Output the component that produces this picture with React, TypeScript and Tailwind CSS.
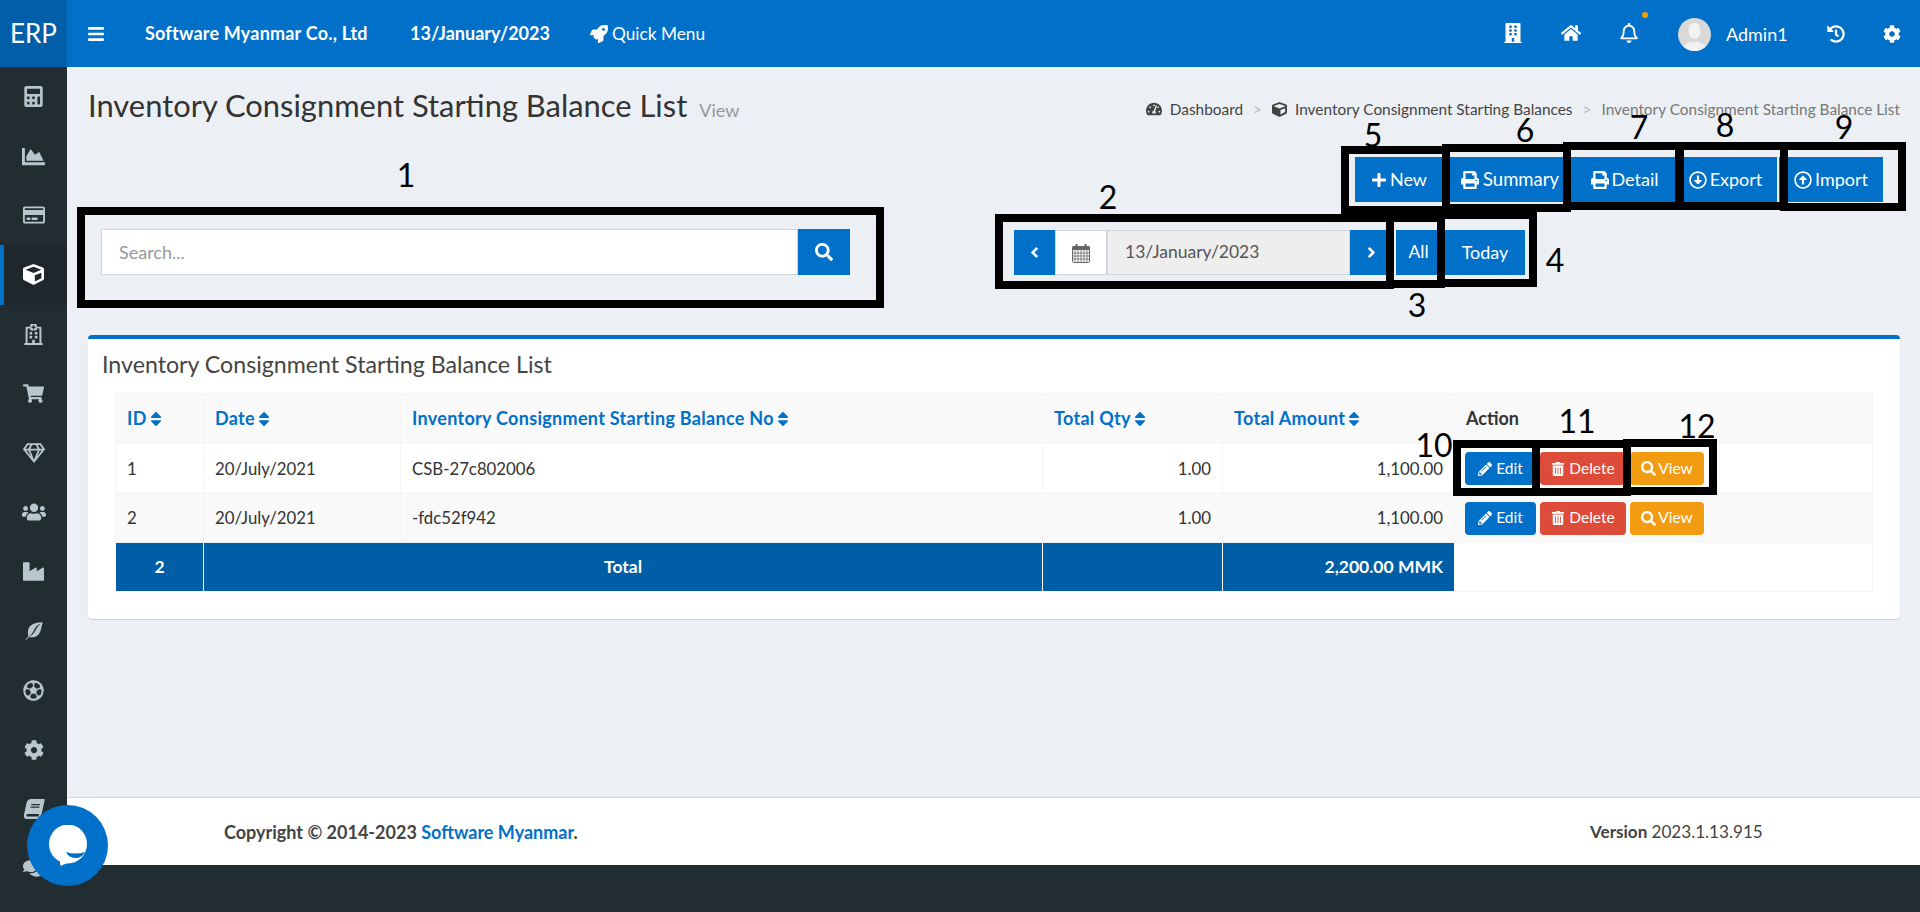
import {
  FaBars, FaRocket, FaBuilding, FaHome, FaRegBell, FaHistory, FaCog, FaCalculator, FaChartArea,
  FaRegCreditCard, FaCube, FaRegHospital, FaShoppingCart, FaRegGem, FaUsers, FaIndustry, FaEnvira,
  FaRegFutbol, FaBook, FaComments, FaTachometerAlt, FaSearch, FaPlus, FaPrint, FaRegArrowAltCircleDown,
  FaRegArrowAltCircleUp, FaAngleLeft, FaAngleRight, FaPencilAlt, FaTrashAlt, FaSort,
} from 'react-icons/fa';

const sideItems = [
  { icon: FaCalculator, size: 21 },
  { icon: FaChartArea, size: 23 },
  { icon: FaRegCreditCard, size: 22 },
  { icon: FaCube, size: 21 },
  { icon: FaRegHospital, size: 21 },
  { icon: FaShoppingCart, size: 21 },
  { icon: FaRegGem, size: 22 },
  { icon: FaUsers, size: 24 },
  { icon: FaIndustry, size: 21 },
  { icon: FaEnvira, size: 20, className: '-scale-x-100' },
  { icon: FaRegFutbol, size: 21 },
  { icon: FaCog, size: 20 },
  { icon: FaBook, size: 20, className: '-skew-x-12' },
  { icon: FaComments, size: 21 },
];

const Sortable = ({ label, w }: { label: string; w: string }) => (
  <th className={`${w} border border-[#f4f4f4] px-[11px] text-left font-bold tracking-[0.3px] text-[#0070c9]`}>
    <span className="inline-flex items-center">
      {label}
      <FaSort size={18} />
    </span>
  </th>
);

const RowActions = () => (
  <div className="flex gap-[4px] pl-[10px] pt-[1px] text-[15.5px] text-white">
    <button className="flex h-[33px] w-[71px] items-center justify-center gap-[4px] rounded-[4px] bg-[#0070c9]">
      <FaPencilAlt size={14} /> Edit
    </button>
    <button className="flex h-[33px] w-[86px] items-center justify-center gap-[4px] rounded-[4px] bg-[#dd4b39]">
      <FaTrashAlt size={14} /> Delete
    </button>
    <button className="flex h-[33px] w-[74px] items-center justify-center gap-[2px] rounded-[4px] bg-[#f39c12]">
      <FaSearch size={15} /> View
    </button>
  </div>
);

export default function App() {
  return (
    <div className="relative flex h-[912px] w-[1920px] flex-col overflow-hidden bg-[#ecf0f5] font-[Lato,sans-serif] text-[#333]">
      {/* Header */}
      <header className="flex h-[67px] shrink-0 items-center bg-[#0070c9] text-white">
        <div className="flex h-full w-[67px] items-center justify-center bg-[#005fa8] text-[26px]">ERP</div>
        <FaBars className="ml-[20px]" size={18} />
        <span className="ml-[40px] w-[224px] whitespace-nowrap text-[18px] font-bold tracking-[0.2px]">Software Myanmar Co., Ltd</span>
        <span className="ml-[41px] w-[139px] whitespace-nowrap text-[18px] font-bold">13/January/2023</span>
        <FaRocket className="ml-[41px]" size={18} />
        <span className="ml-[4px] text-[17.3px]">Quick Menu</span>
        <FaBuilding className="absolute left-[1503px] top-[23px]" size={20} />
        <FaHome className="absolute left-[1561px] top-[23px]" size={20} />
        <FaRegBell className="absolute left-[1619px] top-[23px]" size={20} />
        <span className="absolute left-[1642px] top-[12px] h-[6px] w-[6px] rounded-full bg-[#f39c12]" />
        <div className="absolute left-[1678px] top-[18px] h-[33px] w-[33px] overflow-hidden rounded-full bg-[#d9d9d9]">
          <svg viewBox="0 0 33 33" className="h-full w-full">
            <ellipse cx="16.5" cy="13" rx="6" ry="8" fill="#f2f2f2" />
            <path d="M4 33c1-8 7-9 12.5-9S28 25 29 33z" fill="#f2f2f2" />
          </svg>
        </div>
        <span className="absolute left-[1726px] top-[23px] text-[18px] leading-[22px]">Admin1</span>
        <FaHistory className="absolute left-[1827px] top-[25px]" size={18} />
        <FaCog className="absolute left-[1883px] top-[25px]" size={18} />
      </header>

      <div className="flex flex-1">
        {/* Sidebar */}
        <aside className="w-[67px] shrink-0 bg-[#222d32]">
          {sideItems.map((item, i) => (
            <div
              key={i}
              className={`flex h-[59.4px] items-center justify-center ${
                i === 3 ? 'border-l-4 border-[#0070c9] bg-[#1e282c] pr-[4px] text-white' : 'text-[#b8c7ce]'
              }`}
            >
              <item.icon size={item.size} className={item.className} />
            </div>
          ))}
        </aside>

        <div className="flex flex-1 flex-col">
          {/* Main */}
          <main className="relative h-[730px]">
            <div className="absolute left-[21px] top-[19px] flex items-baseline whitespace-nowrap">
              <h1 className="text-[30.9px] leading-[40px] text-[#333]">Inventory Consignment Starting Balance List</h1>
              <span className="ml-[12px] text-[18px] text-[#999]">View</span>
            </div>

            <div className="absolute right-[20px] top-[32px] flex items-center whitespace-nowrap text-[15.4px] leading-[20px] text-[#444]">
              <FaTachometerAlt size={16} />
              <span className="ml-[8px]">Dashboard</span>
              <span className="mx-[10px] text-[#bbb]">&gt;</span>
              <FaCube size={15} />
              <span className="ml-[8px]">Inventory Consignment Starting Balances</span>
              <span className="mx-[10px] text-[#bbb]">&gt;</span>
              <span className="text-[#777]">Inventory Consignment Starting Balance List</span>
            </div>

            {/* Toolbar */}
            <div className="absolute left-[1288px] top-[90px] flex h-[45px] text-[18px] text-white">
              <button className="flex w-[88px] items-center justify-center gap-[3px] bg-[#0070c9]"><FaPlus size={16} /> New</button>
              <button className="ml-[2px] flex w-[130px] items-center justify-center gap-[4px] bg-[#0070c9] text-[18.5px]"><FaPrint size={18} /> Summary</button>
              <button className="flex w-[99px] items-center justify-center gap-[3px] bg-[#0070c9]"><FaPrint size={18} /> Detail</button>
              <button className="flex w-[103px] items-center justify-center gap-[3px] bg-[#0070c9]"><FaRegArrowAltCircleDown size={18} /> Export</button>
              <button className="ml-[2px] flex w-[104px] items-center justify-center gap-[3px] bg-[#0070c9]"><FaRegArrowAltCircleUp size={18} /> Import</button>
            </div>

            {/* Search */}
            <div className="absolute left-[34px] top-[162px] flex h-[46px] w-[749px]">
              <div className="flex flex-1 items-center border border-[#d2d6de] bg-white pl-[17px] text-[18px] text-[#999]">Search...</div>
              <button className="flex w-[52px] items-center justify-center bg-[#0070c9] text-white"><FaSearch size={18} /></button>
            </div>

            {/* Date picker */}
            <div className="absolute left-[947px] top-[163px] flex h-[45px] text-[17.5px]">
              <button className="flex w-[41px] items-center justify-center bg-[#0070c9] text-white"><FaAngleLeft size={17} /></button>
              <div className="flex w-[52px] items-center justify-center border border-[#d2d6de] bg-white">
                <svg viewBox="0 0 18 20" className="h-[20px] w-[18px]" fill="none" stroke="#666" strokeWidth="1">
                  <rect x="0.5" y="3.5" width="17" height="16" rx="1" />
                  <path d="M1 3.5h16v3H1z" fill="#666" />
                  <path d="M4.5 1v4M13.5 1v4" strokeWidth="2" />
                  <path d="M6 6.5v13M9 6.5v13M12 6.5v13M15 6.5v13M3 6.5v13M1 10h16M1 13h16M1 16h16" strokeWidth="0.8" />
                </svg>
              </div>
              <div className="flex w-[243px] items-center border border-[#d2d6de] bg-[#eee] pl-[17px] text-[#555]">13/January/2023</div>
              <button className="flex w-[42px] items-center justify-center bg-[#0070c9] text-white"><FaAngleRight size={17} /></button>
              <button className="ml-[4px] w-[45px] bg-[#0070c9] text-white">All</button>
              <button className="ml-[4px] w-[80px] bg-[#0070c9] text-[18px] text-white">Today</button>
            </div>

            {/* Card */}
            <section className="absolute left-[21px] top-[268px] h-[284px] w-[1812px] rounded-[4px] border-t-4 border-[#0070c9] bg-white shadow-[0_1px_1px_rgba(0,0,0,0.15)]">
              <h3 className="absolute left-[14px] top-[10px] whitespace-nowrap text-[23.2px] leading-[30px] text-[#444]">Inventory Consignment Starting Balance List</h3>
              <table className="absolute left-[27px] top-[54px] w-[1758px] table-fixed border-collapse text-[16.8px] text-[#333]">
                <thead>
                  <tr className="h-[50px] bg-[#f9f9f9] text-[18px]">
                    <Sortable label="ID" w="w-[88px]" />
                    <Sortable label="Date" w="w-[197px]" />
                    <Sortable label="Inventory Consignment Starting Balance No" w="w-[642px]" />
                    <Sortable label="Total Qty" w="w-[180px]" />
                    <Sortable label="Total Amount" w="w-[232px]" />
                    <th className="border border-[#f4f4f4] px-[11px] text-left font-bold">Action</th>
                  </tr>
                </thead>
                <tbody>
                  <tr className="h-[49px]">
                    <td className="border border-[#f4f4f4] px-[11px] pt-[1px]">1</td>
                    <td className="border border-[#f4f4f4] px-[11px] pt-[1px]">20/July/2021</td>
                    <td className="border border-[#f4f4f4] px-[11px] pt-[1px]">CSB-27c802006</td>
                    <td className="border border-[#f4f4f4] px-[11px] pt-[1px] text-right">1.00</td>
                    <td className="border border-[#f4f4f4] px-[11px] pt-[1px] text-right">1,100.00</td>
                    <td className="border border-[#f4f4f4]"><RowActions /></td>
                  </tr>
                  <tr className="h-[50px] bg-[#f9f9f9]">
                    <td className="border border-[#f4f4f4] px-[11px]">2</td>
                    <td className="border border-[#f4f4f4] px-[11px]">20/July/2021</td>
                    <td className="border border-[#f4f4f4] px-[11px]">-fdc52f942</td>
                    <td className="border border-[#f4f4f4] px-[11px] text-right">1.00</td>
                    <td className="border border-[#f4f4f4] px-[11px] text-right">1,100.00</td>
                    <td className="border border-[#f4f4f4]"><RowActions /></td>
                  </tr>
                  <tr className="h-[49px] text-[17.5px] font-bold text-white">
                    <td className="border border-white bg-[#005ea6] text-center">2</td>
                    <td colSpan={2} className="border border-white bg-[#005ea6] text-center">Total</td>
                    <td className="border border-white bg-[#005ea6]" />
                    <td className="border border-white bg-[#005ea6] px-[11px] text-right">2,200.00 MMK</td>
                    <td className="border border-[#f4f4f4]" />
                  </tr>
                </tbody>
              </table>
            </section>
          </main>

          {/* Footer */}
          <footer className="relative h-[68px] border-t border-[#d2d6de] bg-white text-[18px] font-bold text-[#444]">
            <span className="absolute left-[157px] top-[21px]">
              Copyright © 2014-2023 <span className="text-[#0070c9]">Software Myanmar</span>.
            </span>
            <span className="absolute left-[1523px] top-[21px] text-[17.1px]">
              Version <span className="font-normal">2023.1.13.915</span>
            </span>
          </footer>
          <div className="flex-1 bg-[#222d32]" />
        </div>
      </div>

      {/* Chat bubble */}
      <div className="absolute left-[27px] top-[805px] flex h-[81px] w-[81px] items-center justify-center rounded-full bg-[#0070c9]">
        <svg viewBox="0 0 38 41" className="h-[41px] w-[38px]">
          <ellipse cx="19" cy="19" rx="19" ry="19.5" fill="#fff" />
          <path d="M10 30l1.500 11 14-6z" fill="#fff" />
          <path d="M17 27Q26.500 30 36 27Q33 33 26.500 33Q20 33 17 27z" fill="#0070c9" />
        </svg>
      </div>

      {/* Annotation boxes */}
      <div className="absolute left-[77px] top-[207px] h-[101px] w-[807px] border-8 border-black" />
      <div className="absolute left-[995px] top-[214px] h-[75px] w-[399px] border-8 border-black" />
      <div className="absolute left-[1386px] top-[214px] h-[74px] w-[59px] border-8 border-black" />
      <div className="absolute left-[1437px] top-[211px] h-[76px] w-[100px] border-8 border-black" />
      <div className="absolute left-[1341px] top-[146px] h-[68px] w-[109px] border-8 border-black" />
      <div className="absolute left-[1442px] top-[144px] h-[68px] w-[129px] border-8 border-black" />
      <div className="absolute left-[1563px] top-[142px] h-[68px] w-[121px] border-8 border-black" />
      <div className="absolute left-[1675px] top-[142px] h-[68px] w-[113px] border-8 border-black" />
      <div className="absolute left-[1780px] top-[142px] h-[69px] w-[126px] border-8 border-black" />
      <div className="absolute left-[1453px] top-[440px] h-[56px] w-[87px] border-8 border-black" />
      <div className="absolute left-[1532px] top-[440px] h-[56px] w-[99px] border-8 border-black" />
      <div className="absolute left-[1623px] top-[439px] h-[56px] w-[94px] border-8 border-black" />

      {/* Annotation numbers */}
      {[
        ['1', 406, 175], ['2', 1108, 197], ['3', 1417, 305], ['4', 1555, 260], ['5', 1373, 135], ['6', 1525, 130],
        ['7', 1639, 127], ['8', 1725, 125], ['9', 1844, 127], ['10', 1434, 445], ['11', 1577, 421], ['12', 1697, 426],
      ].map(([n, x, y]) => (
        <span
          key={n}
          className="absolute -translate-x-1/2 -translate-y-1/2 text-[32px] leading-none text-black"
          style={{ left: x as number, top: y as number }}
        >
          {n}
        </span>
      ))}
    </div>
  );
}
